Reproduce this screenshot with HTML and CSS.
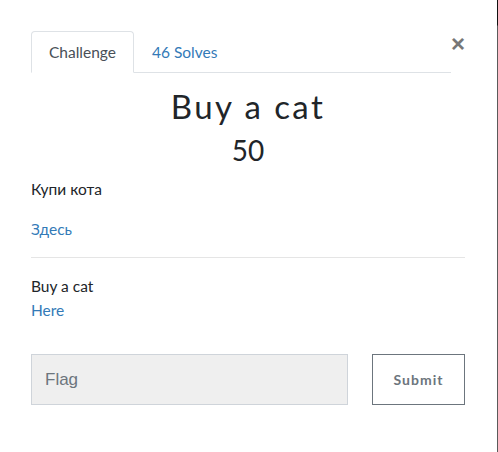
FILE: index.html
```html
<!DOCTYPE html>
<html>
<head>
<meta charset="utf-8">
<link rel="stylesheet" href="styles.css">
</head>
<body>
<div class="edge"></div>
<div class="modal">
  <div class="header">
    <ul class="tabs">
      <li class="tab active">Challenge</li>
      <li class="tab">46 Solves</li>
    </ul>
    <span class="close">&times;</span>
  </div>
  <h2 class="title">Buy a cat</h2>
  <h3 class="value">50</h3>
  <p class="desc ru">Купи кота</p>
  <a class="link ru">Здесь</a>
  <hr class="rule">
  <p class="desc en">Buy a cat</p>
  <a class="link en">Here</a>
  <div class="submit-row">
    <input class="flag" type="text" placeholder="Flag">
    <button class="submit">Submit</button>
  </div>
</div>
</body>
</html>
```
FILE: styles.css
```css
html, body {
  margin: 0;
  padding: 0;
  background: #fff;
}
body {
  font-family: Lato, "Noto Sans", sans-serif;
  color: #212529;
  width: 498px;
  height: 452px;
  overflow: hidden;
}
.edge {
  position: fixed;
  top: 0;
  right: 0;
  width: 1px;
  height: 452px;
  background: linear-gradient(to bottom, #111 0, #111 25px, #5a5a5a 26px, #5a5a5a 100%);
}
.modal {
  padding: 31px 33px 0 31px;
  width: 434px;
}
.header {
  display: flex;
  align-items: flex-start;
}
.tabs {
  list-style: none;
  margin: 0;
  padding: 0;
  display: flex;
  flex: 1;
  border-bottom: 1px solid #dee2e6;
}
.tab {
  font-size: 15.5px;
  line-height: 24px;
  padding: 8px 17px 8px 17px;
  color: #337ab7;
  border: 1px solid transparent;
  border-radius: 4px 4px 0 0;
  margin-bottom: -1px;
}
.tab.active {
  color: #495057;
  border-color: #dee2e6 #dee2e6 #fff;
  background: #fff;
}
.close {
  width: 14px;
  font-size: 24px;
  line-height: 24px;
  font-weight: 700;
  color: #777;
  margin-top: 1px;
  text-align: right;
  font-family: "Liberation Sans", Arial, sans-serif;
}
.title {
  margin: 12px 0 0;
  text-align: center;
  font-weight: 400;
  font-size: 33px;
  line-height: 42px;
  letter-spacing: 2.4px;
  color: #212529;
}
.value {
  margin: 4px 0 0;
  text-align: center;
  font-weight: 400;
  font-size: 28px;
  line-height: 38px;
  color: #212529;
}
.desc {
  margin: 0;
  font-size: 15.5px;
  line-height: 24px;
}
.desc.ru {
  margin-top: 8px;
}
.link {
  display: block;
  color: #337ab7;
  font-size: 15.5px;
  line-height: 24px;
}
.link.ru {
  margin-top: 16px;
}
.rule {
  border: 0;
  border-top: 1px solid #e5e5e5;
  margin: 16px 0 16px;
}
.submit-row {
  display: flex;
  gap: 24px;
  margin-top: 32px;
}
.flag {
  flex: 1;
  height: 51px;
  box-sizing: border-box;
  background: #efefef;
  border: 1px solid #cfd4da;
  padding: 0 13px;
  font-family: "Liberation Sans", Arial, sans-serif;
  font-size: 17px;
  color: #495057;
}
.flag::placeholder {
  color: #6c757d;
}
.submit {
  width: 93px;
  height: 51px;
  box-sizing: border-box;
  background: #fff;
  border: 1px solid #6c757d;
  color: #6c757d;
  font-family: Lato, sans-serif;
  font-weight: 700;
  font-size: 14px;
  letter-spacing: 1px;
}
```
